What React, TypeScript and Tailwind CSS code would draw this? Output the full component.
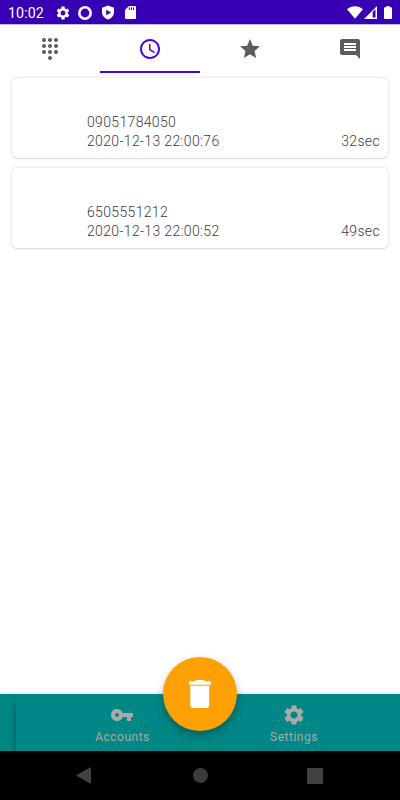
import React from 'react';
import {
  MdAccessTime,
  MdComment,
  MdDialpad,
  MdSettings,
  MdStar,
  MdVpnKey,
} from 'react-icons/md';

const calls = [
  { number: '09051784050', date: '2020-12-13 22:00:76', duration: '32sec' },
  { number: '6505551212', date: '2020-12-13 22:00:52', duration: '49sec' },
];

const tabs = [
  { name: 'Dialpad', icon: MdDialpad },
  { name: 'Recents', icon: MdAccessTime },
  { name: 'Favorites', icon: MdStar },
  { name: 'Messages', icon: MdComment },
];

function StatusBar() {
  return (
    <div className="h-[25px] shrink-0 flex items-center justify-between bg-[#3700b3] border-b border-[#c3bbe3] pl-[8px] pr-[8px] text-white">
      <div className="flex items-center">
        <span className="w-[46.5px] text-[14.2px] leading-4 tracking-[0.1px] pt-[2px]">10:02</span>
        <MdSettings className="size-[16px] mt-[1px]" />
        <svg className="size-[14px] ml-[7.5px] mt-[1px]" viewBox="0 0 14 14">
          <circle cx="7" cy="7" r="5.7" fill="none" stroke="currentColor" strokeWidth="2.6" />
        </svg>
        <svg className="w-[12px] h-[15px] ml-[9.5px] mt-[1px]" viewBox="0 0 12 14">
          <path d="M6 0 12 2.2V6.5C12 10 9.5 13 6 14 2.5 13 0 10 0 6.5V2.2Z" fill="currentColor" />
          <path d="M4.2 4.2 9 7 4.2 9.8Z" fill="#3700b3" />
        </svg>
        <svg className="w-[11px] h-[13px] ml-[11.5px] mt-[1px]" viewBox="0 0 11 13">
          <path d="M4 0H10Q11 0 11 1V12Q11 13 10 13H1Q0 13 0 12V4Z" fill="currentColor" />
          <path d="M4.4 1.4V4M6.5 1.4V4M8.6 1.4V4" stroke="#3700b3" strokeWidth="1" />
        </svg>
      </div>
      <div className="flex items-center">
        <svg className="w-[16px] h-[13px]" viewBox="0 0 16 13">
          <path d="M0 3.2C4.6-.7 11.4-.7 16 3.2L8 12.7Z" fill="currentColor" />
        </svg>
        <svg className="w-[13px] h-[13px] ml-px" viewBox="0 0 13 13">
          <path d="M0 13 13 0V13Z" fill="currentColor" />
          <path d="M8.7 6 11.5 3.2V11.6H8.7Z" fill="#3700b3" />
        </svg>
        <svg className="w-[8px] h-[13px] ml-[7px]" viewBox="0 0 8 13">
          <path d="M2.3 0H5.7V1.3H7Q8 1.3 8 2.3V12Q8 13 7 13H1Q0 13 0 12V2.3Q0 1.3 1 1.3H2.3Z" fill="currentColor" />
        </svg>
      </div>
    </div>
  );
}

function Tabs() {
  return (
    <div className="h-[48px] shrink-0 grid grid-cols-4">
      {tabs.map(({ name, icon: Icon }) => (
        <button
          key={name}
          aria-label={name}
          className={
            name === 'Recents'
              ? 'flex justify-center pt-[12px] border-b-2 border-[#4a00e8] text-[#4a00e8]'
              : 'flex justify-center pt-[12px] border-b-2 border-transparent text-[#5c5c5c]'
          }
        >
          <Icon className="size-[24px]" />
        </button>
      ))}
    </div>
  );
}

function CallCard({ number, date, duration }: { number: string; date: string; duration: string }) {
  return (
    <div className="h-[80px] rounded-[5px] bg-white shadow-[0_0_2px_1px_rgba(0,0,0,0.09),0_1px_1px_rgba(0,0,0,0.08)] pl-[75px] pr-[8px] pt-[34px] text-[14px] font-light leading-[20px] tracking-[0.34px] text-[#3c3c3c]">
      <p>{number}</p>
      <div className="flex justify-between -mt-px">
        <span>{date}</span>
        <span>{duration}</span>
      </div>
    </div>
  );
}

function BottomBar() {
  return (
    <div className="relative h-[57px] shrink-0 bg-[#018786] shadow-[0_-1px_3px_rgba(0,0,0,0.12)] text-[#aaa]">
      <div className="h-full overflow-hidden pl-[16px]">
        <div className="h-full flex bg-[#018786] shadow-[0_5px_7px_rgba(0,0,0,0.35)] text-[12px] leading-4 tracking-[0.5px]">
          <div className="w-[213px] flex flex-col items-center pt-[9px]">
            <MdVpnKey className="size-[24px] mr-px" />
            <span className="mt-[2px]">Accounts</span>
          </div>
          <div className="w-[130px] flex flex-col items-center pt-[9px]">
            <MdSettings className="size-[24px]" />
            <span className="mt-[2px]">Settings</span>
          </div>
        </div>
      </div>
      <button
        aria-label="Delete"
        className="absolute left-[163px] top-[-37px] size-[74px] rounded-full bg-[#fda003] shadow-[0_4px_8px_rgba(0,0,0,0.3)] flex items-center justify-center text-white"
      >
        <svg className="w-[22px] h-[28px]" viewBox="0 0 22 28">
          <path d="M0 1.2H5.5Q6.5 1 6.8 0H15.2Q15.5 1 16.5 1.2H22V4.7H0Z" fill="currentColor" />
          <path d="M1.3 5.8H20.2V25Q20.2 28 17.2 28H4.3Q1.3 28 1.3 25Z" fill="currentColor" />
        </svg>
      </button>
    </div>
  );
}

function NavBar() {
  return (
    <div className="h-[49px] shrink-0 flex items-center justify-between bg-black pl-[76px] pr-[77px] text-[#424242]">
      <svg className="w-[15px] h-[17px]" viewBox="0 0 15 17">
        <path d="M0 8.5 14 .4Q15 0 15 1V16Q15 17 14 16.6Z" fill="currentColor" />
      </svg>
      <span className="size-[15px] ml-[2px] rounded-full bg-[#3c3c3c]" />
      <span className="size-[16px] rounded-[1px] bg-[#424242]" />
    </div>
  );
}

function App() {
  return (
    <div className="w-[400px] h-[800px] flex flex-col overflow-hidden bg-white font-['Roboto',sans-serif]">
      <StatusBar />
      <Tabs />
      <div className="flex-1 flex flex-col gap-[10px] px-[12px] pt-[5px]">
        {calls.map((call) => (
          <CallCard key={call.number} {...call} />
        ))}
      </div>
      <BottomBar />
      <NavBar />
    </div>
  );
}

export default App;
